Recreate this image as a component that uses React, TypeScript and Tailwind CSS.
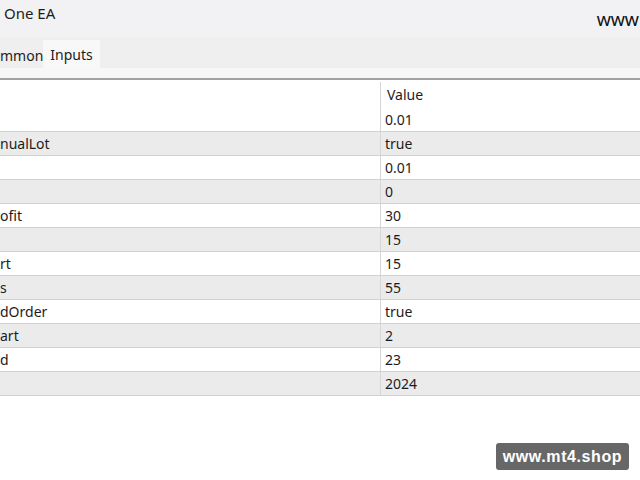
import React from "react";

type Param = { name: string; value: string };

const params: Param[] = [
  { name: "", value: "0.01" },
  { name: "nualLot", value: "true" },
  { name: "", value: "0.01" },
  { name: "", value: "0" },
  { name: "ofit", value: "30" },
  { name: "", value: "15" },
  { name: "rt", value: "15" },
  { name: "s", value: "55" },
  { name: "dOrder", value: "true" },
  { name: "art", value: "2" },
  { name: "d", value: "23" },
  { name: "", value: "2024" },
];

function ParamRow({ p, index }: { p: Param; index: number }) {
  const shaded = index % 2 === 1;
  const first = index === 0;
  return (
    <div
      className={`flex h-[24px] ${shaded ? "bg-[#ebebeb]" : "bg-white"} ${
        first ? "" : "border-t border-[#d2d2d2]"
      }`}
    >
      <div className="w-[381px] shrink-0 border-r border-[#d6d6d6] flex items-center whitespace-nowrap">
        {p.name}
      </div>
      <div className="flex-1 flex items-center pl-[4px]">{p.value}</div>
    </div>
  );
}

export default function App() {
  return (
    <div className="relative w-[640px] h-[480px] overflow-hidden bg-white text-[#1c1c1c] text-[14px] font-['Noto_Sans',sans-serif]">
      {/* window title */}
      <div className="h-[38px] bg-[#f2f2f4] flex justify-between">
        <div className="pl-[4px] pt-[2px] text-[15px]">One EA</div>
        <div className="pt-[9px] pr-[1px] text-[15px] font-medium text-[#111] whitespace-nowrap">
          WWW
        </div>
      </div>

      {/* tab strip */}
      <div className="h-[30px] bg-[#efefef] flex items-end">
        <div className="h-[26px] w-[43px] flex items-center">mmon</div>
        <div className="h-[28px] w-[57px] bg-[#f8f8f8] flex items-center justify-center">
          Inputs
        </div>
      </div>
      <div className="h-[10px] bg-[#f7f7f7]" />
      <div className="h-[2px] bg-[#a2a2a2]" />

      {/* parameters table */}
      <div className="flex h-[27px] pt-[2px]">
        <div className="w-[381px] shrink-0 border-r border-[#d6d6d6]" />
        <div className="flex-1 flex items-center pl-[6px]">Value</div>
      </div>
      <div className="border-b border-[#d2d2d2]">
        {params.map((p, i) => (
          <ParamRow key={i} p={p} index={i} />
        ))}
      </div>

      {/* watermark */}
      <div className="absolute left-[496px] top-[443px] w-[133px] h-[27px] rounded-[3px] bg-[#676767] text-white font-bold text-[16px] tracking-[0.6px] flex items-center justify-center font-['Liberation_Sans',Arial,sans-serif]">
        www.mt4.shop
      </div>
    </div>
  );
}
